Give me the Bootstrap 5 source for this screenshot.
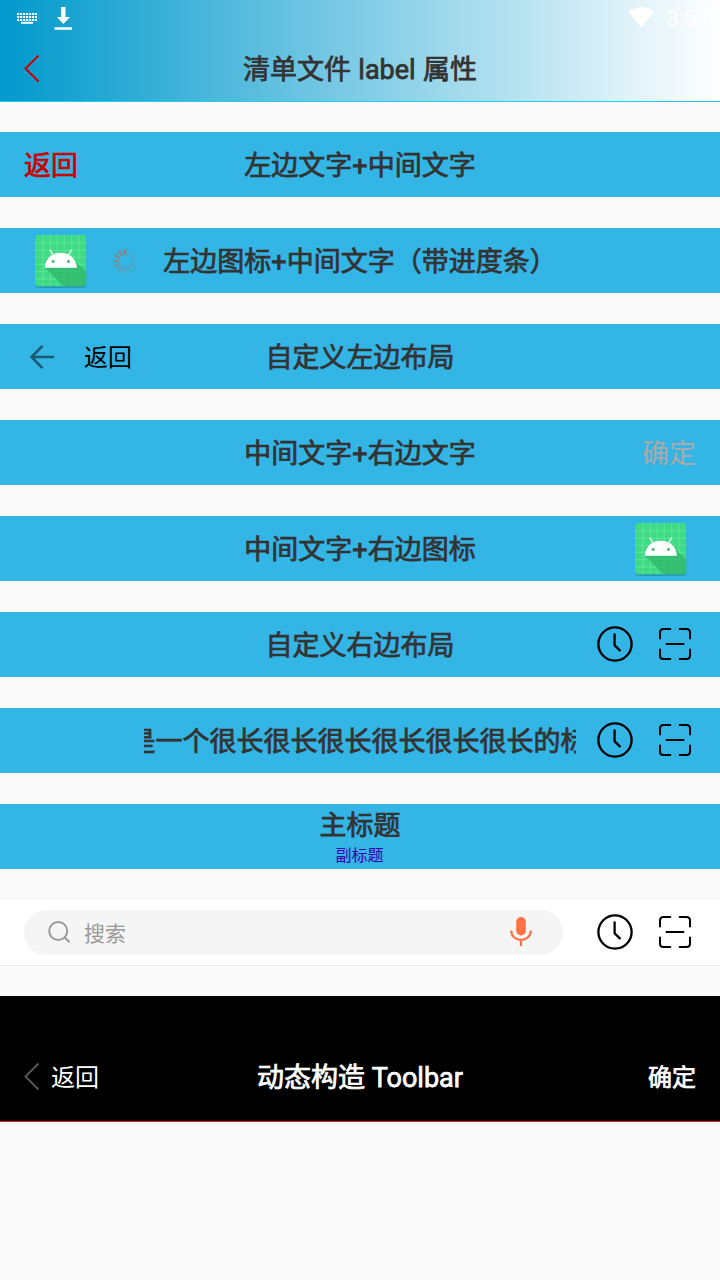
<!DOCTYPE html>
<html lang="zh-CN">
<head>
<meta charset="utf-8">
<meta name="viewport" content="width=device-width, initial-scale=1">
<title>Toolbar</title>
<link href="https://cdn.jsdelivr.net/npm/bootstrap@5.3.0/dist/css/bootstrap.min.css" rel="stylesheet">
<style>
body{background:#fafafa;font-family:Roboto,"Noto Sans CJK SC",sans-serif;color:#333;line-height:1;overflow:hidden;height:1280px}
svg{display:block;flex:none}
.hero{height:102px;background:linear-gradient(90deg,#0099cc,#fff);border-bottom:1px solid #1ccdf5}
.statusbar{height:36px;color:#fff}
.clock-text{font-size:21.5px}
.bar{display:grid;grid-template-columns:100%;grid-template-rows:65px;align-items:center;height:65px;margin-bottom:31px;background:#33b5e5}
.bar>*{grid-area:1/1}
.start{justify-self:start;display:flex;align-items:center}
.end{justify-self:end;display:flex;align-items:center}
.heading{justify-self:center;font-size:27px;line-height:40px;padding-top:2px;white-space:nowrap;-webkit-text-stroke:.75px currentColor}
.hero .bar{background:none;margin:0}
.t27{font-size:27px;line-height:40px;padding-top:2px}
.t24{font-size:24px;line-height:36px}
.t24 span{padding-top:2px}
.bolder-ink{-webkit-text-stroke:.7px currentColor}
.app-icon{margin-top:2px}
.marquee-box{width:432px;overflow:hidden;justify-self:center}
.marquee-box .heading{justify-self:start;margin-left:-42.5px}
.subtitle{font-size:16px;line-height:20px;color:#3700b3;margin-left:-1px;padding-bottom:4px}
.actions{display:flex;gap:24px;padding-bottom:1px}
.searchbar{height:66px;background:#fff;border-bottom:1px solid #ececec;margin-bottom:30px;padding:0 24px}
.searchfield{width:539px;height:45px;background:#f5f5f5;color:#999;font-size:21px}
.dark{height:126px;background:#000;color:#fff;padding-top:48px;border-bottom:1px solid #e61610}
.dark .bar{background:none;height:65px;margin-top:0}
</style>
</head>
<body>
<svg width="0" height="0" class="position-absolute">
<defs>
<symbol id="clock" viewBox="0 0 36 36"><circle cx="18" cy="18" r="16.6" fill="none" stroke="#000" stroke-width="2.3"/><path d="M17.6 8.3V19.2L22.8 24.4" fill="none" stroke="#000" stroke-width="2.3" stroke-linecap="round"/></symbol>
<symbol id="scan" viewBox="0 0 36 36"><path d="M3 12.5V6.5Q3 3 6.500 3H13.300M22.700 3H29.500Q33 3 33 6.500V12.500M33 23.500V29.500Q33 33 29.500 33H22.700M13.300 33H6.500Q3 33 3 29.500V23.500M9.500 18H26.500" fill="none" stroke="#000" stroke-width="2" stroke-linecap="round"/></symbol>
<clipPath id="tile"><rect width="52" height="52" rx="4"/></clipPath>
<symbol id="droid" viewBox="0 0 52 54">
<rect y="1.500" width="52" height="52" rx="4" fill="#2a8fb0" opacity=".75"/>
<g clip-path="url(#tile)"><rect width="52" height="52" fill="#3ddc84"/>
<path d="M8 0V52M15.500 0V52M22.500 0V52M29.500 0V52M37 0V52M44.500 0V52M0 8H52M0 15.500H52M0 22.500H52M0 29.500H52M0 37H52M0 44.500H52" stroke="#7ae8ab" stroke-width=".6"/>
<path d="M10 33L29 52H52V37L39 25L42 33Z" fill="#2fb56c" opacity=".75"/></g>
<path d="M9.800 33C10.500 24 17 18 26 18S41.600 24 42.400 33Z" fill="#fff"/><path d="M18.500 20.500L15.200 14.800M33.500 20.500L36.800 14.800" stroke="#e5fbef" stroke-width="1.300"/>
<circle cx="18.300" cy="26.800" r="1.500" fill="#3bb877"/><circle cx="33.800" cy="26.800" r="1.500" fill="#3bb877"/>
</symbol>
</defs>
</svg>

<header class="hero">
  <div class="statusbar d-flex justify-content-between">
    <div class="d-flex">
      <svg width="80" height="36" viewBox="0 0 80 36"><path d="M17 13.900H37M17 16.900H37M17 19.900H37" stroke="#fff" stroke-width="2" stroke-dasharray="2.200 .8"/><path d="M21 22.800H33" stroke="#fff" stroke-width="2"/><path d="M61 7H65.500V17H70L63.300 24L57 17H61Z" fill="#fff"/><path d="M54.500 28.500H72" stroke="#fff" stroke-width="2.500"/></svg>
    </div>
    <div class="d-flex">
      <svg width="38" height="36" viewBox="1.200 0 38 36" class="overflow-visible"><path d="M.5 11.500Q13.500 2.500 26.500 11.500L13.500 27.500Z" fill="#fff"/></svg>
      <div class="clock-text pt-2 pe-2 me-1">3:59</div>
    </div>
  </div>
  <div class="bar">
    <div class="start ps-4"><svg width="16" height="28" viewBox="0 0.500 16 28"><path d="M14.500 1L1.500 14L14.500 27" fill="none" stroke="#c00" stroke-width="2"/></svg></div>
    <div class="heading" style="word-spacing:.7px">清单文件 label 属性</div>
  </div>
</header>

<main>
  <div class="bar" style="margin-top:30px"><div class="start ps-4 t27 bolder-ink" style="color:#c00">返回</div><div class="heading">左边文字+中间文字</div></div>

  <div class="bar">
    <div class="start" style="padding-left:34.7px">
      <svg width="52" height="54" class="app-icon" viewBox="0 0 52 54"><use href="#droid" width="51.500" height="53.500"/></svg>
      <svg width="24" height="24" viewBox="-12 -12 24 24" style="margin-left:26.3px" stroke="#858789" stroke-width="2.700">
        <path d="M0-6V-12"/><path d="M0-6V-12" transform="rotate(-30)" opacity=".95"/><path d="M0-6V-12" transform="rotate(-60)" opacity=".88"/><path d="M0-6V-12" transform="rotate(-90)" opacity=".8"/><path d="M0-6V-12" transform="rotate(-120)" opacity=".6"/><path d="M0-6V-12" transform="rotate(-150)" opacity=".5"/><path d="M0-6V-12" transform="rotate(180)" opacity=".42"/><path d="M0-6V-12" transform="rotate(150)" opacity=".36"/><path d="M0-6V-12" transform="rotate(120)" opacity=".3"/><path d="M0-6V-12" transform="rotate(90)" opacity=".25"/><path d="M0-6V-12" transform="rotate(60)" opacity=".2"/><path d="M0-6V-12" transform="rotate(30)" opacity=".15"/>
      </svg>
    </div>
    <div class="heading">左边图标+中间文字（带进度条）</div>
  </div>

  <div class="bar">
    <div class="start t24 text-black" style="padding-left:30px"><svg width="24" height="24" viewBox="0 0 24 24"><path d="M12.500 .9L1.500 12L12.500 23.100M1.500 12H24" fill="none" stroke="#175b73" stroke-width="2.600"/></svg><span style="margin-left:30px">返回</span></div>
    <div class="heading">自定义左边布局</div>
  </div>

  <div class="bar"><div class="heading">中间文字+右边文字</div><div class="end pe-4 t27" style="color:#aaa">确定</div></div>

  <div class="bar"><div class="heading">中间文字+右边图标</div><div class="end" style="padding-right:33.300px"><svg width="52" height="54" class="app-icon" viewBox="0 0 52 54"><use href="#droid" width="51.500" height="53.500"/></svg></div></div>

  <div class="bar"><div class="heading">自定义右边布局</div><div class="end" style="padding-right:27px"><div class="actions"><svg width="36" height="36"><use href="#clock"/></svg><svg width="36" height="36"><use href="#scan"/></svg></div></div></div>

  <div class="bar"><div class="marquee-box"><div class="heading">这是一个很长很长很长很长很长很长的标题</div></div><div class="end" style="padding-right:27px"><div class="actions"><svg width="36" height="36"><use href="#clock"/></svg><svg width="36" height="36"><use href="#scan"/></svg></div></div></div>

  <div class="bar"><div class="text-center"><div class="heading">主标题</div><div class="subtitle">副标题</div></div></div>

  <div class="searchbar d-flex align-items-center">
    <div class="searchfield rounded-pill d-flex align-items-center">
      <svg width="24" height="24" viewBox="0 0 24 24" style="margin-left:24px"><circle cx="10.200" cy="10" r="9" fill="none" stroke="#999" stroke-width="2"/><path d="M16.500 16.300L21.500 21.300" stroke="#999" stroke-width="2"/></svg>
      <span class="flex-grow-1 pt-1" style="margin-left:12px">搜索</span>
      <svg width="22" height="29" viewBox="0 0 22 29" style="margin-right:31px;margin-bottom:2px"><rect x="6.200" y="0" width="9.600" height="18.500" rx="4.800" fill="#ff7043"/><path d="M1.200 13.500C1.200 26 20.800 26 20.800 13.500M11 23V29" fill="none" stroke="#ff7043" stroke-width="2.200"/></svg>
    </div>
    <div class="actions" style="margin-left:34px"><svg width="36" height="36"><use href="#clock"/></svg><svg width="36" height="36"><use href="#scan"/></svg></div>
  </div>

  <div class="dark">
    <div class="bar">
      <div class="start ps-4 t24"><svg width="16" height="28" viewBox="0 0.500 16 28"><path d="M14.500 1L1.500 14L14.500 27" fill="none" stroke="#555" stroke-width="2"/></svg><span style="margin-left:11px">返回</span></div>
      <div class="heading">动态构造 Toolbar</div>
      <div class="end pe-4 t24 bolder-ink"><span>确定</span></div>
    </div>
  </div>
</main>
<script src="https://cdn.jsdelivr.net/npm/bootstrap@5.3.0/dist/js/bootstrap.bundle.min.js"></script>
</body>
</html>
